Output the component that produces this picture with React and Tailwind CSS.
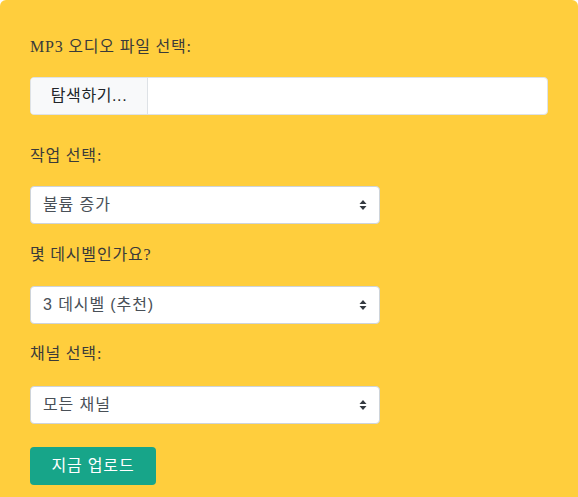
import React from "react";

const sans = { fontFamily: '"Liberation Sans", "Noto Sans CJK KR", sans-serif' };
const serif = { fontFamily: '"Liberation Serif", "Noto Sans CJK KR", serif' };

function Caret() {
  return (
    <svg width="8" height="12" viewBox="0 0 8 12" className="shrink-0">
      <path d="M4 1 L7.5 5 L0.5 5 Z" fill="#343a40" />
      <path d="M4 11 L7.5 7 L0.5 7 Z" fill="#343a40" />
    </svg>
  );
}

function Select({ text }) {
  return (
    <div
      className="w-[350px] h-[38px] bg-white border border-[#ced4da] rounded-[4px] flex items-center justify-between pl-[12px] pr-[12px] text-[16px] tracking-[0.9px] text-[#495057]"
      style={sans}
    >
      <span>{text}</span>
      <Caret />
    </div>
  );
}

function Label({ children, className = "" }) {
  return (
    <div className={"text-[16px] leading-6 tracking-[0.8px] text-[#3a3a3a] " + className} style={serif}>
      {children}
    </div>
  );
}

export default function App() {
  return (
    <div className="w-[578px] h-[497px] bg-white overflow-hidden">
      <div className="w-full h-[500px] bg-[#ffce3d] rounded-t-[6px] pt-[35px] px-[30px]">
        <Label className="mb-[18px]">MP3 오디오 파일 선택:</Label>
        <div className="w-[518px] h-[38px] flex bg-white border border-[#dee2e6] rounded-[4px] overflow-hidden mb-[29px]" style={sans}>
          <div className="w-[117px] h-full bg-[#f8f9fa] border-r border-[#dee2e6] flex items-center justify-center text-[16px] tracking-[0.6px] text-[#212529]">
            탐색하기...
          </div>
        </div>
        <Label className="mb-[18px]">작업 선택:</Label>
        <Select text="불륨 증가" />
        <Label className="mt-[19px] mb-[19px]">몇 데시벨인가요?</Label>
        <Select text="3 데시벨 (추천)" />
        <Label className="mt-[18px] mb-[20px]">채널 선택:</Label>
        <Select text="모든 채널" />
        <button
          className="mt-[23px] w-[126px] h-[38px] bg-[#17a589] text-white rounded-[4px] text-[16px] tracking-[0.8px] flex items-center justify-center"
          style={sans}
        >
          지금 업로드
        </button>
      </div>
    </div>
  );
}
